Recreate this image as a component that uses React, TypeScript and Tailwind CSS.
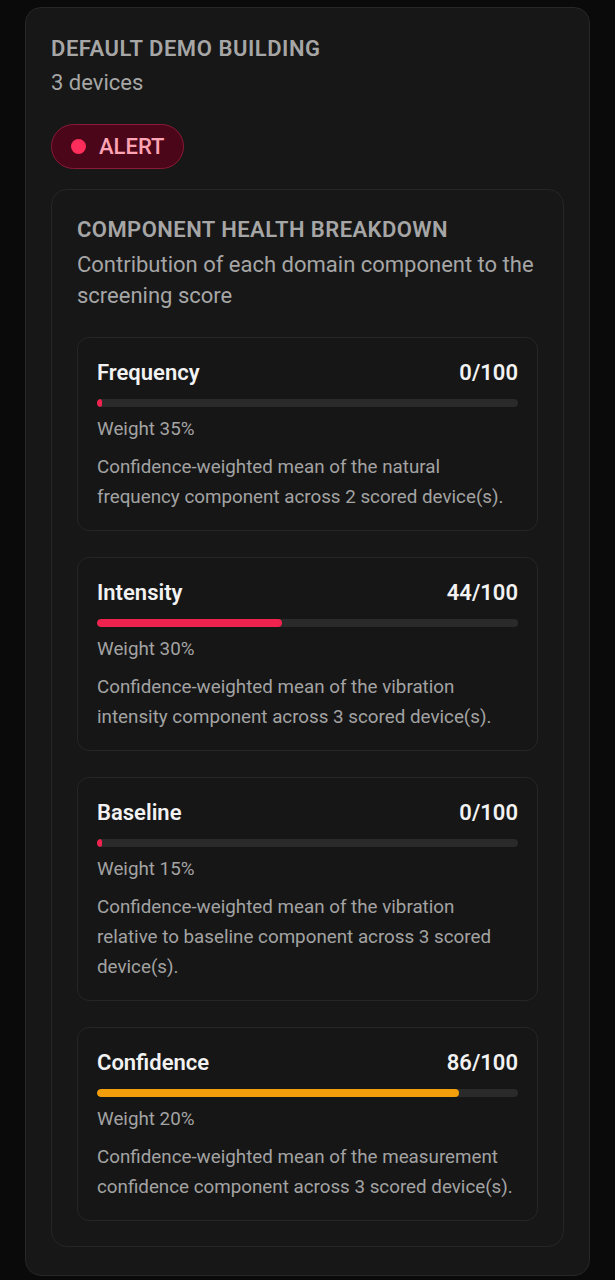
interface Component {
  name: string;
  score: number;
  weight: number;
  color: string;
  description: string;
}

const components: Component[] = [
  {
    name: "Frequency",
    score: 0,
    weight: 35,
    color: "bg-[#f0234f]",
    description: "Confidence-weighted mean of the natural frequency component across 2 scored device(s).",
  },
  {
    name: "Intensity",
    score: 44,
    weight: 30,
    color: "bg-[#f0234f]",
    description: "Confidence-weighted mean of the vibration intensity component across 3 scored device(s).",
  },
  {
    name: "Baseline",
    score: 0,
    weight: 15,
    color: "bg-[#f0234f]",
    description: "Confidence-weighted mean of the vibration relative to baseline component across 3 scored device(s).",
  },
  {
    name: "Confidence",
    score: 86,
    weight: 20,
    color: "bg-[#f59e0b]",
    description: "Confidence-weighted mean of the measurement confidence component across 3 scored device(s).",
  },
];

const ComponentRow = ({ item }: { item: Component }) => {
  return (
    <div className="rounded-xl border border-[#262626] bg-[#161616] px-[19px] pt-5 pb-[18px]">
      <div className="flex items-center justify-between text-[22px] leading-[30px] font-semibold text-[#f2f2f2]">
        <span>{item.name}</span>
        <span>{item.score}/100</span>
      </div>
      <div className="mt-[11px] h-2 w-full overflow-hidden rounded-full bg-[#2a2a2a]">
        <div
          className={`h-full rounded-full ${item.color}`}
          style={{ width: item.score === 0 ? "5px" : `${item.score}%` }}
        />
      </div>
      <p className="mt-[9px] text-[18.8px] leading-[26px] text-[#a3a3a3]">Weight {item.weight}%</p>
      <p className="mt-[10px] text-[18.8px] leading-[30px] text-[#a3a3a3]">{item.description}</p>
    </div>
  );
};

const App = () => {
  return (
    <div className="min-h-[1280px] bg-[#0a0a0a] px-[25px] pt-[7px] pb-[4px] font-['Roboto',sans-serif]">
      <div className="rounded-2xl border border-[#272727] bg-[#171717] px-[25px] pt-[27px] pb-[28px]">
        <h2 className="text-[22px] leading-[28px] font-semibold tracking-[0.025em] text-[#a6a6a6]">
          DEFAULT DEMO BUILDING
        </h2>
        <p className="mt-[6px] text-[22px] leading-[28px] text-[#a6a6a6]">3 devices</p>

        <div className="mt-[27px] inline-flex h-[45px] items-center gap-[13px] rounded-full border border-[#8a1a36] bg-[#4c0619] pl-[19px] pr-[19px]">
          <span className="h-[15px] w-[15px] rounded-full bg-[#ff2d5a]" />
          <span className="text-[22px] font-medium text-[#fda4b4]">ALERT</span>
        </div>

        <div className="mt-[20px] rounded-2xl border border-[#262626] bg-[#171717] px-[25px] pt-[26px] pb-[25px]">
          <h3 className="text-[22px] leading-[28px] font-semibold tracking-[0.02em] text-[#a6a6a6]">
            COMPONENT HEALTH BREAKDOWN
          </h3>
          <p className="mt-[5px] text-[22px] leading-[31px] text-[#a6a6a6]">
            Contribution of each domain component to the screening score
          </p>
          <div className="mt-[26px] flex flex-col gap-[26px]">
            {components.map((item) => (
              <ComponentRow key={item.name} item={item} />
            ))}
          </div>
        </div>
      </div>
    </div>
  );
};

export default App;
